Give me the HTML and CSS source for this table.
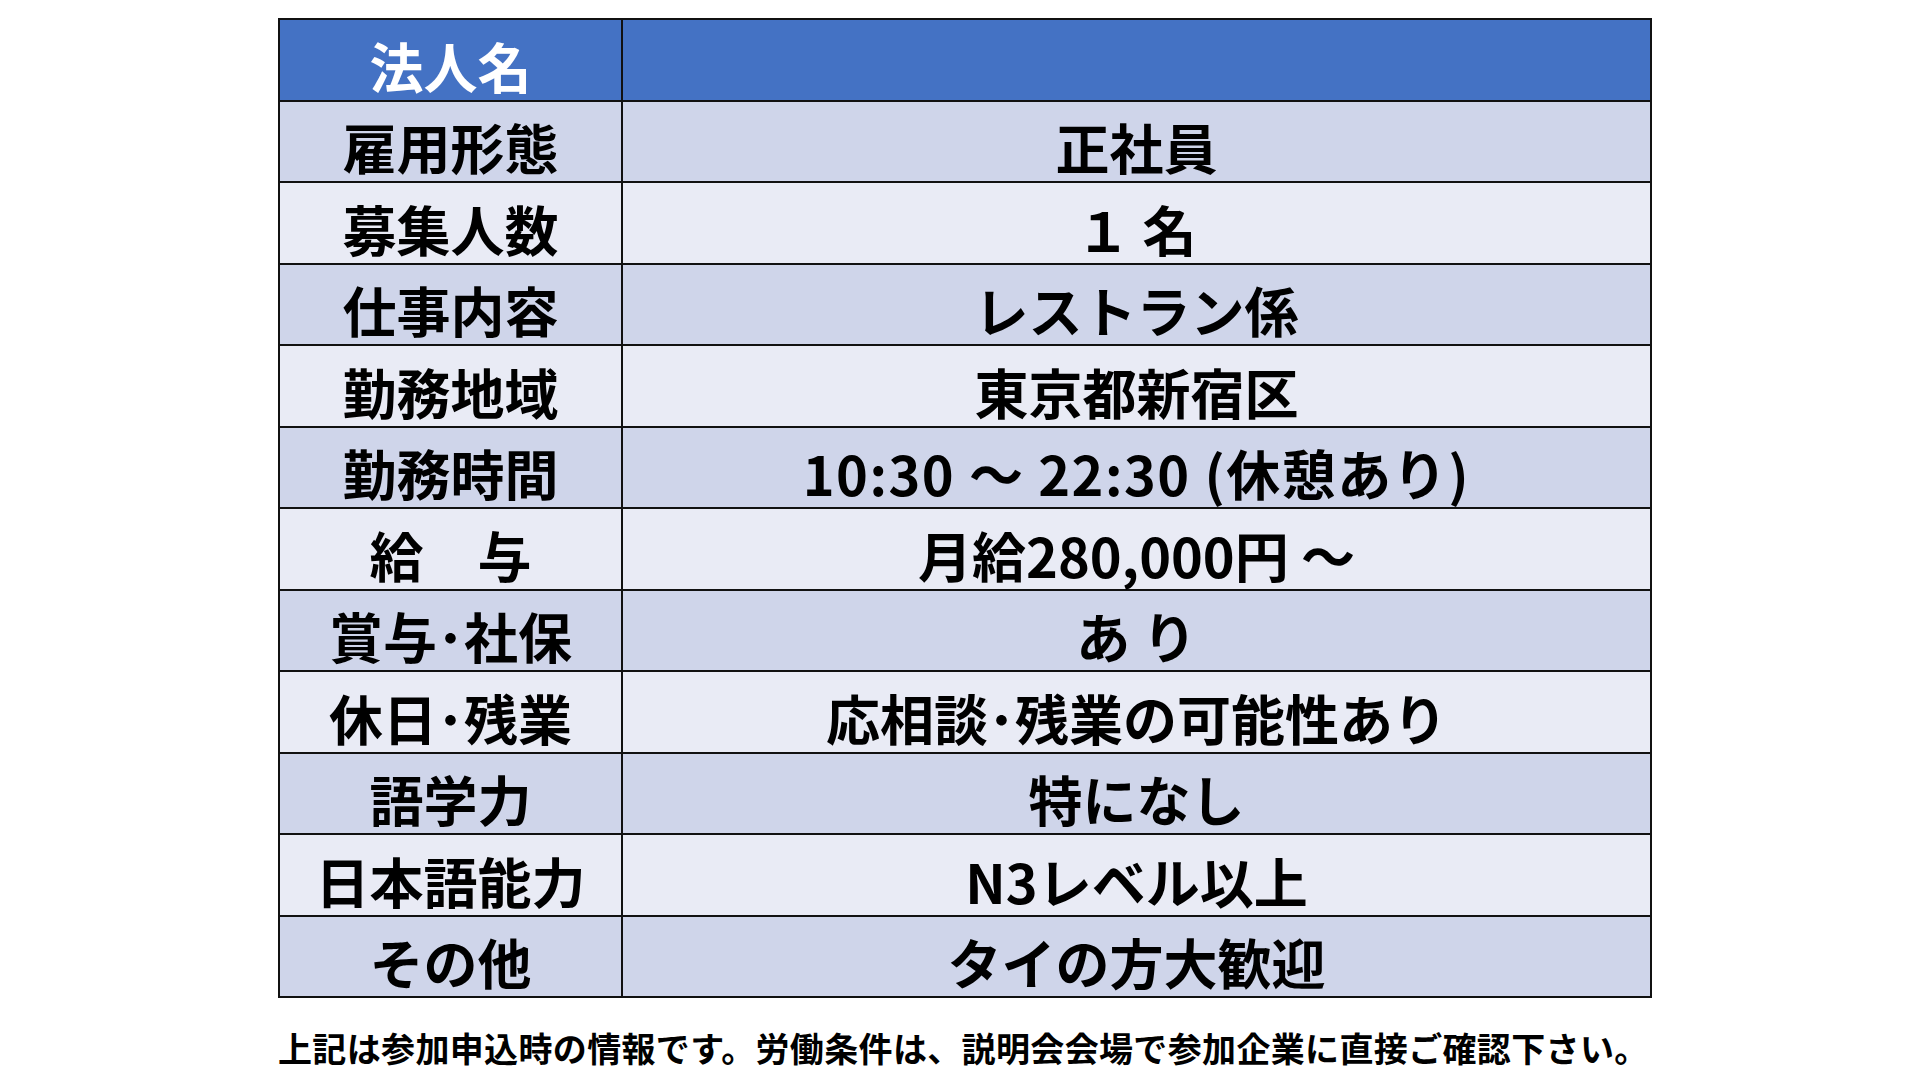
FILE: index.html
```html
<!DOCTYPE html>
<html lang="ja">
<head>
<meta charset="utf-8">
<title>求人情報</title>
<link rel="stylesheet" href="styles.css">
</head>
<body>
<main class="page">
  <table class="job">
    <colgroup><col class="col-label"><col class="col-value"></colgroup>
    <thead>
      <tr class="head"><th>法人名</th><th></th></tr>
    </thead>
    <tbody>
      <tr class="odd"><td>雇用形態</td><td>正社員</td></tr>
      <tr class="even"><td>募集人数</td><td>１ 名</td></tr>
      <tr class="odd"><td>仕事内容</td><td>レストラン係</td></tr>
      <tr class="even"><td>勤務地域</td><td>東京都新宿区</td></tr>
      <tr class="odd"><td>勤務時間</td><td class="wide">10:30 ～ 22:30 (休憩あり)</td></tr>
      <tr class="even"><td>給　与</td><td>月給280,000円 ～</td></tr>
      <tr class="odd"><td>賞与･社保</td><td>あ り</td></tr>
      <tr class="even"><td>休日･残業</td><td>応相談･残業の可能性あり</td></tr>
      <tr class="odd"><td>語学力</td><td>特になし</td></tr>
      <tr class="even"><td>日本語能力</td><td>N3レベル以上</td></tr>
      <tr class="odd"><td>その他</td><td>タイの方大歓迎</td></tr>
    </tbody>
  </table>
  <p class="note">上記は参加申込時の情報です。労働条件は、説明会会場で参加企業に直接ご確認下さい。</p>
</main>
</body>
</html>
```

FILE: styles.css
```css
html, body {
  margin: 0;
  padding: 0;
  background: #ffffff;
}

body {
  width: 1920px;
  height: 1080px;
  overflow: hidden;
  font-family: "Noto Sans CJK JP", "Noto Sans", sans-serif;
  color: #000;
}

.page {
  padding: 18px 0 0 278px;
}

.job {
  border-collapse: collapse;
  width: 1372px;
  table-layout: fixed;
}

.col-label { width: 343px; }
.col-value { width: 1029px; }

.job th,
.job td {
  border: 2px solid #111;
  height: 81.5px;
  box-sizing: border-box;
  padding: 12px 0 0 0;
  text-align: center;
  vertical-align: middle;
  font-size: 54px;
  font-weight: 700;
  line-height: 1;
  white-space: nowrap;
}

.job td.wide {
  letter-spacing: 1.5px;
}

.head th {
  background: #4472c4;
  color: #fff;
}

.odd td { background: #cfd5ea; }
.even td { background: #e9ebf5; }

.note {
  margin: 30px 0 0 0;
  font-size: 34px;
  font-weight: 700;
  line-height: 1.2;
  letter-spacing: 0.35px;
  white-space: nowrap;
}
```
